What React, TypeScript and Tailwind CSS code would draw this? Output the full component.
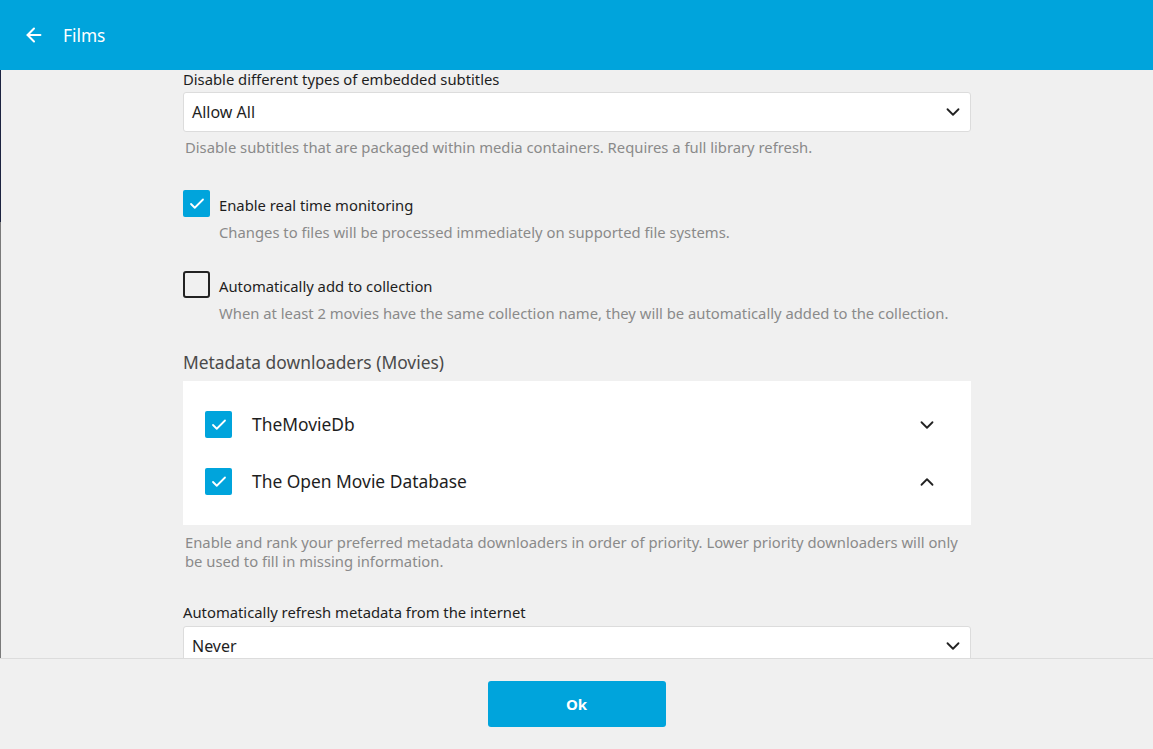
import { ArrowLeft, ChevronDown, ChevronUp, Check } from 'lucide-react';

const font = { fontFamily: '"Noto Sans", "Open Sans", sans-serif' };

function Select({ value }: { value: string }) {
  return (
    <div className="h-10 bg-white border border-[#dcdcdc] rounded-[3px] flex items-center justify-between pl-[8px] pr-[6px] shrink-0">
      <span className="text-[16px] text-[#1e1e1e]">{value}</span>
      <ChevronDown className="w-[22px] h-[22px] text-[#222]" strokeWidth={2} />
    </div>
  );
}

function CheckRow({ checked, label, help }: { checked: boolean; label: string; help: string }) {
  return (
    <div>
      <div className="flex items-center gap-[9px]">
        {checked ? (
          <span className="w-[27px] h-[27px] rounded-[2px] bg-[#00a4dc] flex items-center justify-center">
            <Check className="w-[18px] h-[18px] text-white" strokeWidth={2.4} />
          </span>
        ) : (
          <span className="w-[27px] h-[27px] rounded-[3px] border-2 border-[#222]" />
        )}
        <span className="text-[14.8px] leading-[20px] text-[#1e1e1e] mt-[2px]">{label}</span>
      </div>
      <p className="ml-[36px] mt-[5px] text-[14.8px] leading-[20px] text-[#8a8a8a]">{help}</p>
    </div>
  );
}

export default function App() {
  const downloaders = [
    { name: 'TheMovieDb', open: false },
    { name: 'The Open Movie Database', open: true },
  ];

  return (
    <div style={font} className="h-[749px] w-full flex flex-col bg-[#f0f0f0] overflow-hidden">
      <header className="h-[70px] shrink-0 bg-[#00a4dc] flex items-center text-white">
        <ArrowLeft className="w-[22px] h-[22px] ml-[23px]" strokeWidth={2.2} />
        <h1 className="ml-[18px] text-[17.3px] mt-[2px]">Films</h1>
      </header>

      <main className="flex-1 flex overflow-hidden">
        <div className="w-px flex flex-col">
          <div className="h-[152px] bg-[#1c2340]" />
          <div className="flex-1 bg-[#7a7a7a]" />
        </div>
        <div className="flex-1">
          <div className="w-[788px] mx-[auto]">
            <label className="block text-[14.8px] leading-[18px] text-[#1e1e1e] mb-[4px]">Disable different types of embedded subtitles</label>
            <Select value="Allow All" />
            <p className="mt-[5px] ml-[2px] text-[14.8px] leading-[20px] text-[#8a8a8a]">
              Disable subtitles that are packaged within media containers. Requires a full library refresh.
            </p>

            <div className="mt-[33px]">
              <CheckRow checked label="Enable real time monitoring" help="Changes to files will be processed immediately on supported file systems." />
            </div>
            <div className="mt-[29px]">
              <CheckRow checked={false} label="Automatically add to collection" help="When at least 2 movies have the same collection name, they will be automatically added to the collection." />
            </div>

            <h2 className="mt-[27px] text-[17.4px] leading-[24px] text-[#4a4a4a]">Metadata downloaders (Movies)</h2>
            <div className="mt-[7px] bg-white py-[15px]">
              {downloaders.map((d) => (
                <div key={d.name} className="h-[57px] flex items-center pl-[22px] pr-[33px]">
                  <span className="w-[27px] h-[27px] rounded-[2px] bg-[#00a4dc] flex items-center justify-center">
                    <Check className="w-[18px] h-[18px] text-white" strokeWidth={2.4} />
                  </span>
                  <span className="ml-[20px] flex-1 text-[17.4px] text-[#1e1e1e]">{d.name}</span>
                  {d.open ? (
                    <ChevronUp className="w-[22px] h-[22px] text-[#222]" strokeWidth={2} />
                  ) : (
                    <ChevronDown className="w-[22px] h-[22px] text-[#222]" strokeWidth={2} />
                  )}
                </div>
              ))}
            </div>
            <p className="mt-[8px] ml-[2px] text-[14.8px] leading-[19px] text-[#8a8a8a]">
              Enable and rank your preferred metadata downloaders in order of priority. Lower priority downloaders will only be used to fill in missing information.
            </p>

            <label className="block mt-[32px] text-[14.8px] leading-[18px] text-[#1e1e1e] mb-[5px]">Automatically refresh metadata from the internet</label>
            <Select value="Never" />
          </div>
        </div>
      </main>

      <footer className="h-[91px] shrink-0 border-t border-[#dcdcdc] flex justify-center pt-[22px]">
        <button className="w-[178px] h-[46px] bg-[#00a4dc] rounded-[3px] text-white font-bold text-[15px]">Ok</button>
      </footer>
    </div>
  );
}
